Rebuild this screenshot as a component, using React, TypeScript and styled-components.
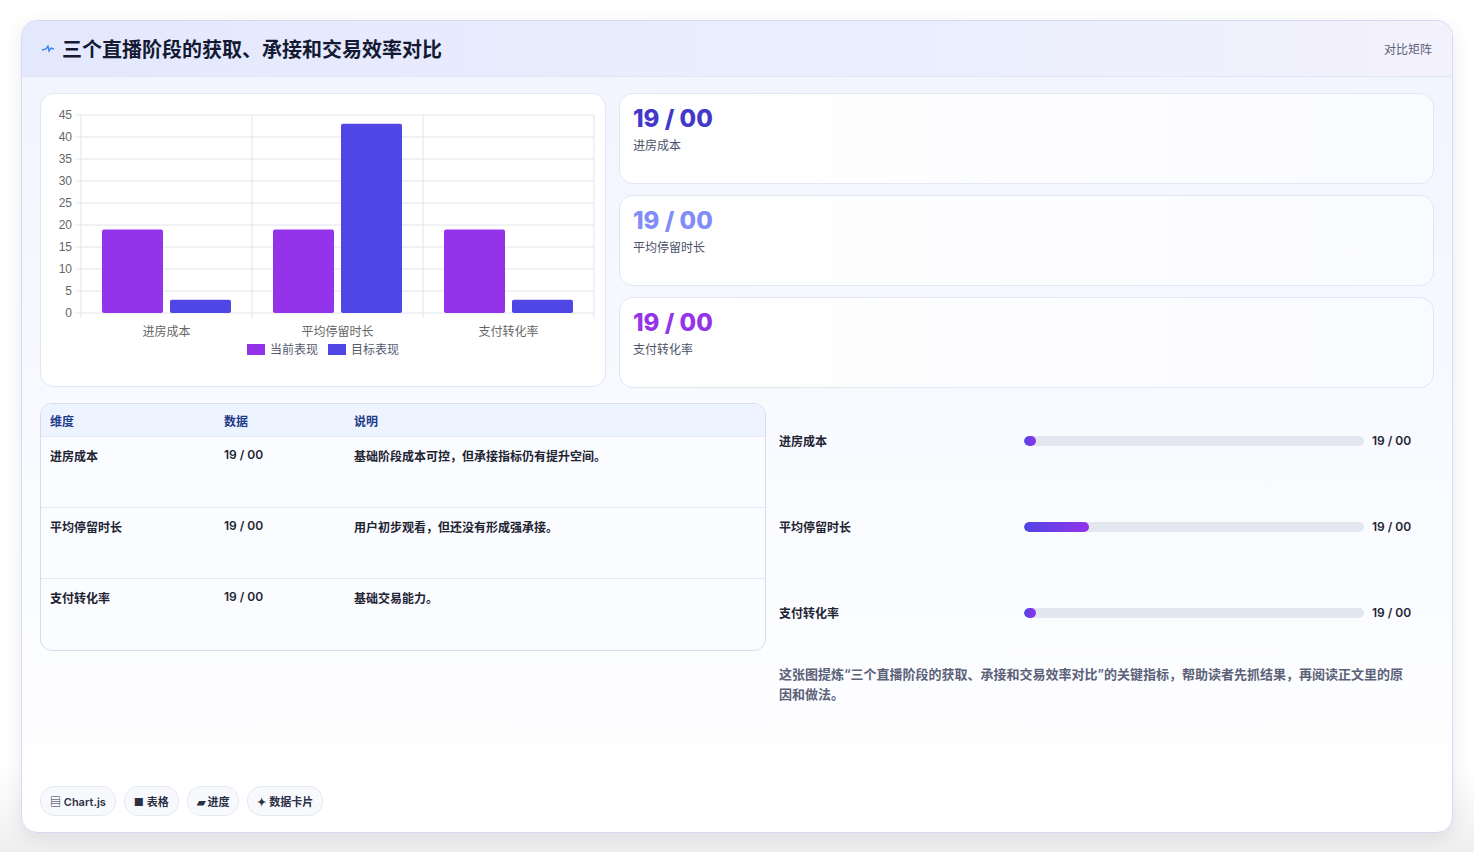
import styled, { createGlobalStyle } from "styled-components";

const Global = createGlobalStyle`
  body { margin: 0; background: #f3f3f5; font-family: Inter, "Noto Sans CJK SC", sans-serif; }
`;

const Page = styled.div`
  width: 1474px;
  height: 852px;
  box-sizing: border-box;
  padding: 20px 21px 21px 21px;
  background: linear-gradient(180deg, #ffffff 0%, #ffffff 90%, #efefef 100%);
`;

const Card = styled.div`
  height: 811px;
  border: 1px solid #d5d9f3;
  border-radius: 16px;
  overflow: hidden;
  display: flex;
  flex-direction: column;
  background: linear-gradient(180deg, #f1f4fe 0%, #f8faff 50%, #ffffff 100%);
  box-shadow: 0 6px 18px rgba(80, 80, 120, 0.12);
`;

const Header = styled.div`
  height: 55px;
  flex: none;
  display: flex;
  align-items: center;
  justify-content: space-between;
  padding: 0 20px;
  background: linear-gradient(90deg, #e4e8fd 0%, #eceffd 70%, #f3f1fc 100%);
  border-bottom: 1px solid #e2e6f8;
`;

const Title = styled.h1`
  margin: 0;
  font-size: 20px;
  font-weight: 700;
  color: #141a33;
  display: flex;
  align-items: center;
  gap: 8px;
`;

const Tag = styled.span`
  font-size: 12px;
  color: #5b6178;
`;

const Body = styled.div`
  flex: 1;
  display: flex;
  flex-direction: column;
  padding: 16px 18px 16px 18px;
`;

const Grid = styled.div<{ $cols: string }>`
  display: grid;
  grid-template-columns: ${(p) => p.$cols};
  column-gap: 13px;
  margin-bottom: 15px;
`;

const Panel = styled.div`
  background: #fff;
  border: 1px solid #e3e7f3;
  border-radius: 14px;
`;

const ChartPanel = styled(Panel)`
  height: 294px;
  box-sizing: border-box;
  padding: 0 10px 0 10px;
`;

const Stats = styled.div`
  display: flex;
  flex-direction: column;
  gap: 11px;
`;

const StatCard = styled(Panel)`
  height: 91px;
  box-sizing: border-box;
  padding: 11px 13px;
  background: linear-gradient(90deg, #ffffff, #fafbff);
`;

const StatValue = styled.div<{ $c: string }>`
  font-size: 24px;
  font-weight: 800;
  color: ${(p) => p.$c};
  line-height: 28px;
`;

const StatLabel = styled.div`
  font-size: 12px;
  color: #4b5168;
  margin-top: 3px;
`;

const Table = styled.div`
  border: 1px solid #d8dcea;
  border-radius: 12px;
  overflow: hidden;
  background: #fafcff;
  height: 248px;
  box-sizing: border-box;
`;

const Row = styled.div<{ $head?: boolean }>`
  display: grid;
  grid-template-columns: 174px 130px 1fr;
  padding: ${(p) => (p.$head ? "8px 9px" : "10px 9px")};
  height: ${(p) => (p.$head ? "33px" : "71px")};
  box-sizing: border-box;
  font-size: 12px;
  font-weight: 600;
  color: ${(p) => (p.$head ? "#1e3a8a" : "#1f2433")};
  background: ${(p) => (p.$head ? "#eef4ff" : "transparent")};
  border-bottom: 1px solid #e4e8f2;
  &:last-child { border-bottom: none; }
`;

const Side = styled.div`
  padding: 0 20px 0 0;
  display: flex;
  flex-direction: column;
`;

const ProgRow = styled.div`
  height: 86px;
  display: grid;
  grid-template-columns: 237px 340px 1fr;
  column-gap: 8px;
  align-items: center;
  align-content: start;
  padding-top: 29px;
  box-sizing: border-box;
  font-size: 12px;
  font-weight: 600;
  color: #1f2433;
`;

const Track = styled.div`
  height: 10px;
  border-radius: 5px;
  background: #e2e7f0;
  overflow: hidden;
`;

const Fill = styled.div`
  height: 100%;
  border-radius: 5px;
  background: linear-gradient(90deg, #4f46e5, #9333ea);
`;

const Note = styled.p`
  margin: 3px 0 0;
  font-size: 13px;
  line-height: 20px;
  color: #5b6178;
  font-weight: 600;
`;

const Chips = styled.div`
  margin-top: auto;
  display: flex;
  gap: 8px;
`;

const Chip = styled.span`
  font-size: 11px;
  font-weight: 600;
  color: #2b3045;
  padding: 6px 9px;
  border: 1px solid #e6e9f2;
  border-radius: 14px;
  background: #f8f9fc;
`;

const Legend = styled.div`
  display: flex;
  justify-content: center;
  gap: 10px;
  font-size: 12px;
  color: #555b70;
`;

const Swatch = styled.span<{ $c: string }>`
  display: inline-block;
  width: 18px;
  height: 11px;
  background: ${(p) => p.$c};
  margin-right: 5px;
  vertical-align: -1px;
`;

const rows = [
  { n: "进房成本", d: "基础阶段成本可控，但承接指标仍有提升空间。", cur: 19, tgt: 3, w: 3.5 },
  { n: "平均停留时长", d: "用户初步观看，但还没有形成强承接。", cur: 19, tgt: 43, w: 19 },
  { n: "支付转化率", d: "基础交易能力。", cur: 19, tgt: 3, w: 3.5 },
];

const Chart = () => {
  const x0 = 30, y0 = 219, h = 198, w = 513;
  const ticks = [0, 5, 10, 15, 20, 25, 30, 35, 40, 45];
  const cw = w / 3;
  const y = (v: number) => y0 - (v / 45) * h;
  return (
    <svg width="546" height="246" style={{ display: "block" }}>
      {ticks.map((t) => (
        <g key={t}>
          <line x1={x0 - 5} x2={x0 + w} y1={y(t)} y2={y(t)} stroke="#e3e5ea" />
          <text x={x0 - 9} y={y(t) + 4} fontSize="12" textAnchor="end" fill="#666" fontFamily="Liberation Sans, sans-serif">{t}</text>
        </g>
      ))}
      {[0, 1, 2, 3].map((i) => (
        <line key={i} x1={x0 + i * cw} x2={x0 + i * cw} y1={y(45)} y2={y0 + 5} stroke="#e3e5ea" />
      ))}
      {rows.map((r, i) => {
        const cx = x0 + i * cw;
        return (
          <g key={r.n}>
            <rect x={cx + 21} y={y(r.cur)} width={61} height={y0 - y(r.cur)} rx="2" fill="#9333ea" />
            <rect x={cx + 89} y={y(r.tgt)} width={61} height={y0 - y(r.tgt)} rx="2" fill="#4f46e5" />
            <text x={cx + cw / 2} y={y0 + 23} fontSize="12" textAnchor="middle" fill="#666">{r.n}</text>
          </g>
        );
      })}
    </svg>
  );
};

export default function App() {
  return (
    <Page>
      <Global />
      <Card>
        <Header>
          <Title>
            <svg width="12" height="8" viewBox="0 0 12 8"><path d="M0 5 L4 4 L6 1 L7 6 L9 3 L12 4" stroke="#3b82f6" strokeWidth="1.4" fill="none" /></svg>
            三个直播阶段的获取、承接和交易效率对比
          </Title>
          <Tag>对比矩阵</Tag>
        </Header>
        <Body>
          <Grid $cols="566px 1fr">
            <ChartPanel>
              <Chart />
              <Legend>
                <span><Swatch $c="#9333ea" />当前表现</span>
                <span><Swatch $c="#4f46e5" />目标表现</span>
              </Legend>
            </ChartPanel>
            <Stats>
              {rows.map((r, i) => (
                <StatCard key={r.n}>
                  <StatValue $c={["#4338ca", "#818cf8", "#9333ea"][i]}>19 / 00</StatValue>
                  <StatLabel>{r.n}</StatLabel>
                </StatCard>
              ))}
            </Stats>
          </Grid>
          <Grid $cols="726px 1fr">
            <Table>
              <Row $head><span>维度</span><span>数据</span><span>说明</span></Row>
              {rows.map((r) => (
                <Row key={r.n}><span>{r.n}</span><span>19 / 00</span><span>{r.d}</span></Row>
              ))}
            </Table>
            <Side>
              {rows.map((r) => (
                <ProgRow key={r.n}>
                  <span>{r.n}</span>
                  <Track><Fill style={{ width: `${r.w}%` }} /></Track>
                  <span>19 / 00</span>
                </ProgRow>
              ))}
              <Note>这张图提炼“三个直播阶段的获取、承接和交易效率对比”的关键指标，帮助读者先抓结果，再阅读正文里的原因和做法。</Note>
            </Side>
          </Grid>
          <Chips>
            <Chip>▤ Chart.js</Chip>
            <Chip>■ 表格</Chip>
            <Chip>▰ 进度</Chip>
            <Chip>✦ 数据卡片</Chip>
          </Chips>
        </Body>
      </Card>
    </Page>
  );
}
